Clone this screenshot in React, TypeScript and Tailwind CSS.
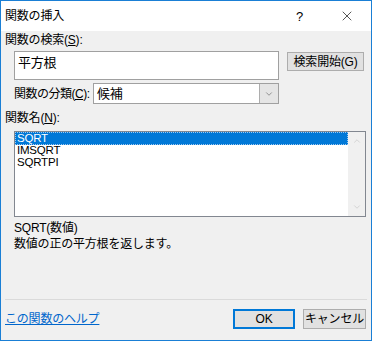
import { X, ChevronDown, ChevronUp } from 'lucide-react';

const FONT = "font-['Liberation_Sans','Noto_Sans_CJK_JP',sans-serif]";

const items = ['SQRT', 'IMSQRT', 'SQRTPI'];

const Btn = (props: { label: string; className?: string }) => (
  <div
    className={`flex items-center justify-center bg-[#e1e1e1] border border-[#adadad] text-[12px] text-black whitespace-nowrap ${props.className ?? ''}`}
  >
    {props.label}
  </div>
);

export default function App() {
  return (
    <div className={`w-[372px] h-[341px] border border-[#1a7fd5] bg-[#f0f0f0] flex flex-col text-[12px] text-black leading-none whitespace-nowrap tracking-[-0.2px] ${FONT}`}>
      {/* title bar */}
      <div className="h-[30px] bg-white flex items-center shrink-0">
        <span className="pl-[4px] text-[12px]">関数の挿入</span>
        <span className="ml-auto mr-[36px] text-[13px]">?</span>
        <X size={16} strokeWidth={1} className="mr-[16px]" />
      </div>

      {/* body */}
      <div className="flex-1 flex flex-col">
        <div className="h-[16px] mt-[1px] pl-[4px] flex items-center">
          関数の検索(<span className="underline">S</span>):
        </div>

        <div className="mt-[3px] flex items-start pl-[13px]">
          <div className="w-[265px] h-[29px] bg-white border border-[#a0a0a0] pl-[3px] pt-[4px] text-[13px]">
            平方根
          </div>
          <Btn label="検索開始(G)" className="ml-[8px] mt-[1px] w-[77px] h-[19px]" />
        </div>

        <div className="mt-[3px] flex items-center pl-[13px] h-[21px]">
          <span className="w-[79px] shrink-0 tracking-[-0.5px]">
            関数の分類(<span className="underline">C</span>):
          </span>
          <div className="w-[186px] h-[21px] bg-white border border-[#a0a0a0] flex items-center">
            <span className="pl-[3px] text-[13px] flex-1">候補</span>
            <div className="w-[19px] h-full bg-[#e5e5e5] border-l border-[#adadad] flex items-center justify-center">
              <ChevronDown size={10} strokeWidth={1.5} className="text-[#606060]" />
            </div>
          </div>
        </div>

        <div className="h-[27px] pl-[4px] flex items-center">
          関数名(<span className="underline">N</span>):
        </div>

        <div className="ml-[13px] w-[352px] h-[86px] bg-white border border-[#828790] flex">
          <div className="flex-1 flex flex-col text-[11.5px]">
            {items.map((it, i) => (
              <div
                key={it}
                className={
                  i === 0
                    ? 'h-[13px] bg-[#0078d7] text-white border border-dotted border-[#9ec8ef] pl-[1px] flex items-center'
                    : 'h-[12px] pl-[2px] flex items-center'
                }
              >
                {it}
              </div>
            ))}
          </div>
          <div className="w-[17px] bg-[#f0f0f0] flex flex-col justify-between items-center py-[4px]">
            <ChevronUp size={10} strokeWidth={1.5} className="text-[#c2c2c2]" />
            <ChevronDown size={10} strokeWidth={1.5} className="text-[#c2c2c2]" />
          </div>
        </div>

        <div className="pl-[13px] mt-[3px] leading-[16px]">
          <div>SQRT(数値)</div>
          <div>数値の正の平方根を返します。</div>
        </div>

        <div className="mt-auto mx-[4px] h-px bg-[#dadada]" />

        <div className="h-[40px] flex items-center pl-[4px] pr-[5px] pb-[2px]">
          <span className="text-[#0066cc] underline">この関数のヘルプ</span>
          <div className="ml-auto w-[62px] h-[20px] flex items-center justify-center bg-[#e1e1e1] border-2 border-[#0078d7]">
            OK
          </div>
          <Btn label="キャンセル" className="ml-[8px] w-[63px] h-[20px]" />
        </div>
      </div>
    </div>
  );
}
